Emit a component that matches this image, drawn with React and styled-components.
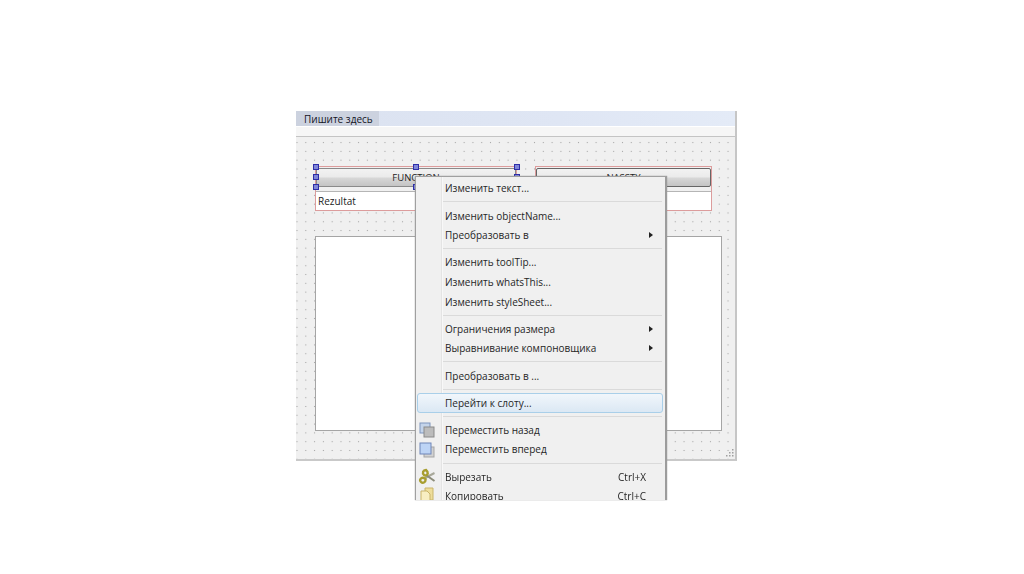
import React from "react";
import styled, { createGlobalStyle } from "styled-components";

const Global = createGlobalStyle`
  html, body { margin: 0; padding: 0; background: #fff; }
  body { width: 1024px; height: 574px; overflow: hidden; font-family: "Open Sans", "Noto Sans", sans-serif; }
`;

const Page = styled.div`
  width: 1024px;
  height: 574px;
  padding: 111px 0 0 296px;
  box-sizing: border-box;
  background: #fff;
`;

const Window = styled.div`
  position: relative;
  width: 441px;
  height: 350px;
  box-sizing: border-box;
  display: flex;
  flex-direction: column;
  background: #f0f0f0;
  border-right: 2px solid #c6c6c6;
  border-bottom: 2px solid #c9c9c9;
  filter: blur(0.3px);
`;

const MenuBar = styled.div`
  height: 15px;
  flex: none;
  display: flex;
  background: linear-gradient(90deg, #dbe2f0, #dfe6f4 60%, #e4ebf7);
`;

const MenuBarItem = styled.div`
  width: 83px;
  padding-left: 8px;
  box-sizing: border-box;
  background: #ccd2df;
  color: #14141f;
  font-size: 10px;
  font-weight: 500;
  line-height: 17px;
  white-space: nowrap;
`;

const ToolStrip = styled.div`
  height: 11px;
  flex: none;
  background: #f6f6f6;
  border-top: 1px solid #fff;
  border-bottom: 1px solid #c4c4c4;
  box-sizing: border-box;
`;

const Canvas = styled.div`
  position: relative;
  flex: 1;
  background-color: #f0f0f0;
  background-image: radial-gradient(circle at center, #a4a4a4 0, #b0b0b0 0.6px, transparent 1px);
  background-size: 8.8px 8.8px;
  background-position: 5.4px 1.2px;
`;

const LayoutBox = styled.div`
  position: absolute;
  left: ${p => p.$x}px;
  top: 29px;
  width: ${p => p.$w}px;
  height: 45px;
  box-sizing: border-box;
  border: 1px solid #dc9c9c;
  background: #f0f0f0;
  display: flex;
  flex-direction: column;
  gap: 4px;
  padding-top: 1px;
`;

const PushButton = styled.div`
  height: 19px;
  flex: none;
  box-sizing: border-box;
  border: 1px solid ${p => (p.$dark ? "#666" : "#8a8a8a")};
  border-radius: 2px;
  background: linear-gradient(#f2f2f2 0%, #ebebeb 45%, #d6d6d6 55%, #c4c4c4 100%);
  color: #222;
  font-size: 9.5px;
  line-height: 18px;
  text-align: center;
`;

const LineEdit = styled.div`
  height: 19px;
  flex: none;
  box-sizing: border-box;
  background: #fff;
  border-top: 1px solid #b5b5b5;
  padding-left: 2px;
  color: #222;
  font-size: 10px;
  line-height: 18px;
`;

const Handle = styled.span`
  position: absolute;
  left: ${p => p.$x}px;
  top: ${p => p.$y}px;
  width: 6px;
  height: 6px;
  box-sizing: border-box;
  background: #7f86d8;
  border: 1px solid #2d2da8;
`;

const TextArea = styled.div`
  position: absolute;
  left: 19px;
  top: 99px;
  width: 407px;
  height: 195px;
  box-sizing: border-box;
  background: #fff;
  border: 1px solid #a5a5a5;
`;

const Grip = styled.svg`
  position: absolute;
  right: 0;
  bottom: 1px;
`;

const Menu = styled.div`
  position: absolute;
  left: 119px;
  top: 65px;
  width: 252px;
  height: 324px;
  overflow: hidden;
  box-sizing: border-box;
  background: #f0f0f0;
  border: 1px solid #a0a0a0;
  border-right: 2px solid #9c9c9c;
  border-bottom: none;
  padding-top: 1.6px;
  box-shadow: 0 0 1px #888;
`;

const Gutter = styled.div`
  position: absolute;
  left: 25px;
  top: 0;
  bottom: 0;
  width: 1px;
  background: #e4e4e4;
  border-right: 1px solid #f8f8f8;
`;

const Row = styled.div`
  position: relative;
  height: 19.6px;
  margin: 0 2px 0 1px;
  display: flex;
  align-items: center;
  box-sizing: border-box;
  padding-left: 28px;
  padding-right: 10px;
  font-size: 10px;
  font-weight: 500;
  color: #262626;
  white-space: nowrap;
  ${p => p.$active && `
    background: linear-gradient(#f1f6fb, #dbe8f4);
    border: 1px solid #a9cfe9;
    border-radius: 3px;
    padding-left: 27px;
  `}
`;

const Label = styled.span`
  flex: 1;
`;

const Shortcut = styled.span`
  margin-right: 7px;
`;

const Arrow = styled.span`
  width: 0;
  height: 0;
  border-left: 4px solid #222;
  border-top: 3.5px solid transparent;
  border-bottom: 3.5px solid transparent;
`;

const Separator = styled.div`
  height: 7.6px;
  display: flex;
  align-items: center;
  margin-left: 26px;
  &::after {
    content: "";
    flex: 1;
    height: 1px;
    margin-right: 3px;
    background: #dadada;
  }
`;

const IconSlot = styled.span`
  position: absolute;
  left: 1px;
  top: 1px;
  width: 18px;
  height: 18px;
`;

const BackIcon = () => (
  <svg width="18" height="18" viewBox="0 0 18 18">
    <rect x="2" y="2" width="10" height="10" fill="#c4d4ea" stroke="#7f95bd" />
    <rect x="6" y="6" width="10" height="10" fill="#bcbcbc" stroke="#8a8a8a" />
  </svg>
);

const FrontIcon = () => (
  <svg width="18" height="18" viewBox="0 0 18 18">
    <rect x="6" y="6" width="10" height="10" fill="#d2d2d2" stroke="#a5a5a5" />
    <rect x="2" y="2" width="11" height="11" fill="#bdd4f5" stroke="#6f86b8" />
  </svg>
);

const CutIcon = () => (
  <svg width="18" height="18" viewBox="0 0 18 18" fill="none">
    <path d="M16.5 5 L7 10" stroke="#a8a89a" strokeWidth="2" />
    <path d="M16.5 13 L8 7" stroke="#8c8c7a" strokeWidth="2" />
    <path d="M8 2 C5 2 4 5 6 7 C8 8.5 10.5 6 9.5 4 Z" stroke="#a89e30" strokeWidth="2.4" />
    <path d="M6 10 C3 9 1 12 3 14 C5 16 8 14 7.5 11 Z" stroke="#a89e30" strokeWidth="2.4" />
  </svg>
);

const CopyIcon = () => (
  <svg width="18" height="18" viewBox="0 0 18 18">
    <path d="M7 1 H15 V13 H7 Z" fill="#eedd9a" stroke="#c9b46a" />
    <path d="M3 4 H9 L12 7 V17 H3 Z" fill="#f8eec2" stroke="#c9b46a" />
  </svg>
);

const sel = [
  [-3, -3], [97, -3], [198, -3],
  [-3, 7], [198, 7],
  [-3, 17], [97, 17], [198, 17],
];

const Item = ({ children, arrow, shortcut, icon, active }) => (
  <Row $active={active}>
    {icon && <IconSlot>{icon}</IconSlot>}
    <Label>{children}</Label>
    {shortcut && <Shortcut>{shortcut}</Shortcut>}
    {arrow && <Arrow />}
  </Row>
);

export default function App() {
  return (
    <Page>
      <Global />
      <Window>
        <MenuBar>
          <MenuBarItem>Пишите здесь</MenuBarItem>
        </MenuBar>
        <ToolStrip />
        <Canvas>
          <LayoutBox $x={19} $w={202}>
            <PushButton>FUNCTION</PushButton>
            <LineEdit>Rezultat</LineEdit>
            {sel.map(([x, y]) => (
              <Handle key={`${x}-${y}`} $x={x} $y={y} />
            ))}
          </LayoutBox>
          <LayoutBox $x={239} $w={177}>
            <PushButton $dark>NASSTY</PushButton>
            <LineEdit />
          </LayoutBox>
          <TextArea />
        </Canvas>
        <Grip width="10" height="10" viewBox="0 0 10 10">
          <g fill="#a0a0a0">
            <rect x="7" y="1" width="1.5" height="1.5" />
            <rect x="4" y="4" width="1.5" height="1.5" />
            <rect x="7" y="4" width="1.5" height="1.5" />
            <rect x="1" y="7" width="1.5" height="1.5" />
            <rect x="4" y="7" width="1.5" height="1.5" />
            <rect x="7" y="7" width="1.5" height="1.5" />
          </g>
        </Grip>
        <Menu>
          <Gutter />
          <Item>Изменить текст...</Item>
          <Separator />
          <Item>Изменить objectName...</Item>
          <Item arrow>Преобразовать в</Item>
          <Separator />
          <Item>Изменить toolTip...</Item>
          <Item>Изменить whatsThis...</Item>
          <Item>Изменить styleSheet...</Item>
          <Separator />
          <Item arrow>Ограничения размера</Item>
          <Item arrow>Выравнивание компоновщика</Item>
          <Separator />
          <Item>Преобразовать в ...</Item>
          <Separator />
          <Item active>Перейти к слоту...</Item>
          <Separator />
          <Item icon={<BackIcon />}>Переместить назад</Item>
          <Item icon={<FrontIcon />}>Переместить вперед</Item>
          <Separator />
          <Item icon={<CutIcon />} shortcut="Ctrl+X">Вырезать</Item>
          <Item icon={<CopyIcon />} shortcut="Ctrl+C">Копировать</Item>
        </Menu>
      </Window>
    </Page>
  );
}
